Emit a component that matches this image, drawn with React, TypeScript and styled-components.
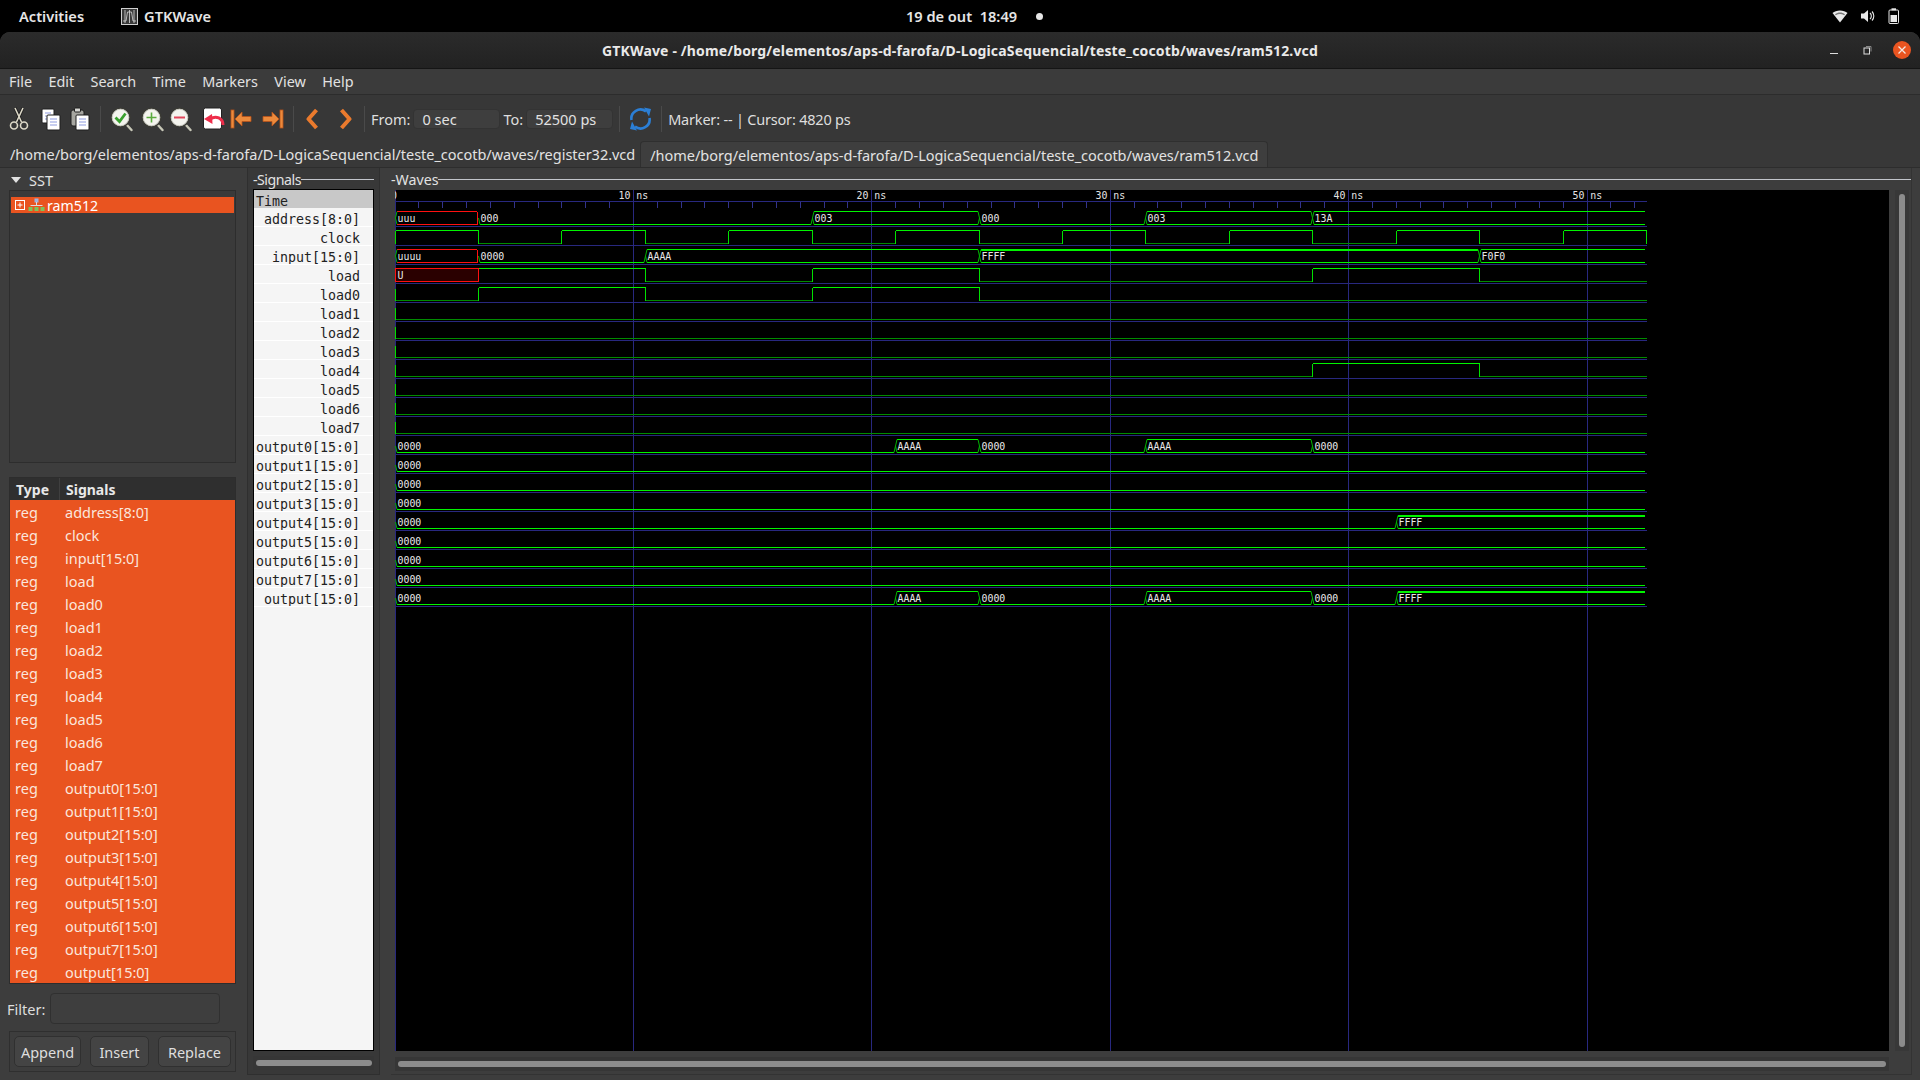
import React from "react";
import styled, { createGlobalStyle } from "styled-components";

const UI = `"Noto Sans", "Open Sans", sans-serif`;
const MONO = `"DejaVu Sans Mono", "Liberation Mono", monospace`;

const Global = createGlobalStyle`
  html, body { margin: 0; padding: 0; background: #000; overflow: hidden; }
  * { box-sizing: border-box; }
`;

const Page = styled.div`
  width: 1920px; height: 1080px; display: flex; flex-direction: column;
  background: #000; font-family: ${UI}; color: #e8e8e8; overflow: hidden;
`;
const TopBar = styled.div`
  height: 32px; flex: none; display: grid; grid-template-columns: 1fr auto 1fr; align-items: center;
  background: #000; padding: 0 18px 0 19px; font-size: 14.6px; font-weight: 600; color: #e6e6e6;
`;
const TopLeft = styled.div`display: flex; align-items: center;`;
const TopItem = styled.span`display: flex; align-items: center; gap: 6px; margin-left: ${p => p.$ml || 0}px;`;
const TopCenter = styled.div`display: flex; align-items: center; gap: 19px; transform: translateX(14px);`;
const Dot = styled.span`width: 7px; height: 7px; border-radius: 50%; background: #e6e6e6;`;
const TopRight = styled.div`display: flex; align-items: center; justify-content: flex-end; gap: 12px; padding-right: 2px;`;

const Win = styled.div`
  flex: 1; display: flex; flex-direction: column; border-radius: 10px 10px 0 0; overflow: hidden; background: #3c3c3c;
`;
const TitleBar = styled.div`
  height: 37px; flex: none; position: relative; display: flex; align-items: center; justify-content: center;
  background: linear-gradient(#2b2b2b, #222222); border-bottom: 1px solid #151515;
  font-size: 14px; font-weight: 700; color: #e9e9e9; letter-spacing: 0.15px;
`;
const WinButtons = styled.div`
  position: absolute; right: 8px; top: 7px; display: flex; align-items: center;
`;
const WinIcon = styled.svg`flex: none; margin-left: ${p => p.$ml}px;`;
const MenuBar = styled.div`
  height: 26px; flex: none; display: flex; align-items: center; padding-left: 9px; gap: 16.4px;
  background: #3b3b3b; border-bottom: 1px solid #2c2c2c; font-size: 14.4px; color: #e2e2e2;
`;
const Toolbar = styled.div`
  height: 45px; flex: none; display: flex; align-items: center; padding: 3px 0 0 9px; background: #373737;
  font-size: 14.5px; color: #dedede;
`;
const ToolIcon = styled.svg`flex: none; margin-right: ${p => p.$mr ?? 8}px;`;
const Sep = styled.span`width: 1px; height: 26px; background: #4a4a4a; flex: none; margin: 0 ${p => p.$r ?? 9}px 0 ${p => p.$l ?? 0}px;`;
const Label = styled.span`flex: none; letter-spacing: ${p => p.$ls || 0}px;`;
const Entry = styled.span`
  flex: none; width: 87px; height: 20px; margin: 0 3px; padding-left: 8px; background: #3e3e3e; border: 1px solid #333; border-radius: 4px;
  display: flex; align-items: center; color: #e2e2e2;
`;
const TabStrip = styled.div`
  height: 28px; flex: none; display: flex; align-items: stretch; background: #383838; padding: 1px 0 0 10px; font-size: 14.5px;
  border-bottom: 1px solid #2d2d2d; color: #e2e2e2;
`;
const Tab = styled.div`
  display: flex; align-items: center; white-space: nowrap; letter-spacing: -0.025px;
  ${p => p.$active ? `margin-left: 5px; padding: 0 9px; background: #3e3e3e; border: 1px solid #2f2f2f; border-bottom: none; border-radius: 4px 4px 0 0;` : ``}
`;
const Main = styled.div`
  flex: 1; display: grid; grid-template-columns: 247px 133px 1fr; background: #3d3d3d; min-height: 0;
`;
const LeftCol = styled.div`display: flex; flex-direction: column; padding: 3px 11px 0 9px;`;
const SstHead = styled.div`
  height: 19px; display: flex; align-items: center; gap: 8px; padding: 0 0 1px 2px; font-size: 14.5px; color: #e2e2e2;
`;
const Tri = styled.span`
  width: 0; height: 0; border-left: 5px solid transparent; border-right: 5px solid transparent; border-top: 6px solid #e2e2e2;
`;
const SstFrame = styled.div`
  height: 273px; border: 1px solid #2d2d2d; background: #3a3a3a; padding: 6px 1px;
`;
const SstRow = styled.div`
  height: 16px; background: #e95420; display: flex; align-items: center; padding-left: 3px; color: #fff; font-size: 14.2px; gap: 2px;
`;
const ListFrame = styled.div`
  margin-top: 14px; height: 507px; border: 1px solid #2d2d2d; display: flex; flex-direction: column;
`;
const ListHead = styled.div`
  height: 22px; flex: none; display: grid; grid-template-columns: 50px 1fr; background: #2f2f2f; font-weight: 700; font-size: 14px; color: #e8e8e8;
`;
const HeadCell = styled.div`
  display: flex; align-items: center; padding-left: ${p => p.$pl}px; border-right: ${p => p.$sep ? "1px solid #3f3f3f" : "none"};
`;
const SigRows = styled.div`flex: 1; background: #e95420;`;
const SigRow = styled.div`
  height: 23px; display: grid; grid-template-columns: 50px 1fr; align-items: center; padding-left: 5px; color: #fbe6dc; font-size: 14.5px;
`;
const FilterRow = styled.div`
  margin: 9px 0 0 -2px; display: flex; align-items: center; gap: 5px; font-size: 14.5px; color: #dedede;
`;
const FilterInput = styled.div`
  width: 170px; height: 31px; background: #3e3e3e; border: 1px solid #303030; border-radius: 4px;
`;
const BtnFrame = styled.div`
  margin-top: 7px; height: 41px; border: 1px solid #2f2f2f; display: flex; align-items: center; padding-left: 4px;
`;
const Btn = styled.div`
  width: ${p => p.$w}px; height: 31px; margin-right: ${p => p.$mr}px; display: flex; align-items: center; justify-content: center;
  background: #444; border: 1px solid #303030; border-radius: 5px; font-size: 14.5px; color: #dedede;
`;
const SignalsCol = styled.div`
  display: flex; flex-direction: column; background: #383838; border: 1px solid #2f2f2f; border-top: none; margin-bottom: 5px; padding: 0 5px 0 5px;
`;
const Legend = styled.div`
  height: ${p => p.$h}px; flex: none; display: flex; align-items: center; font-size: 14.2px; color: #e2e2e2; padding-top: 1px;
  letter-spacing: ${p => p.$ls || 0}px;
`;
const LegendLine = styled.span`flex: 1; height: 1px; background: #c2c5cb;`;
const SigBox = styled.div`
  height: 862px; flex: none; border: 1px solid #000; background: #f5f5f5; font-family: ${MONO}; font-size: 13.3px; color: #222; overflow: hidden;
`;
const TimeRow = styled.div`height: 18px; background: #c8c8c8; padding-left: 2px; line-height: 23px; overflow: hidden;`;
const NameRow = styled.div`
  height: 19px; line-height: 23px; text-align: right; padding-right: 13px; border-bottom: 1px solid #fff; white-space: nowrap; overflow: hidden;
`;
const HTrough = styled.div`
  margin-top: ${p => p.$mt}px; height: 14px; background: #363636; display: flex; align-items: center; padding: 0 ${p => p.$pr}px 0 ${p => p.$pl}px;
`;
const Thumb = styled.div`flex: 1; height: 6px; border-radius: 3px; background: #8c8c8c;`;
const WaveCol = styled.div`
  display: flex; flex-direction: column; margin: 0 8px 5px 11px; border-right: 1px solid #333; border-bottom: 1px solid #333; padding-left: 4px;
`;
const WaveLegend = styled(Legend)`margin-left: -4px;`;
const WaveBody = styled.div`display: flex; flex: none; height: 861px;`;
const WaveSvg = styled.svg`display: block; flex: none; background: #000;`;
const VTrough = styled.div`
  width: 14px; margin-left: 6px; flex: none; background: #383838; display: flex; justify-content: center; padding: 4px 0;
`;
const VThumb = styled.div`width: 6px; border-radius: 3px; background: #8c8c8c;`;
const WaveHBar = styled(HTrough)`width: 1494px;`;

const X = (t: number) => Math.floor(395 + 23.84 * t) + 0.5;
const HI = (i: number) => 211.5 + 19 * i;
const LO = (i: number) => 224.5 + 19 * i;
const END = 52.5;
const G1 = "#00f400";
const G0 = "#008c00";
const GV = "#00e000";
const GS = "#00b400";
const RED = "#ff1010";
const BLUE = "#28287f";

type Bit = { name: string; init: 0 | 1 | "U"; edges: [number, 0 | 1][] };
type Vec = { name: string; segs: [number, string][] };
type Sig = Bit | Vec;
const b = (name: string, init: 0 | 1 | "U", edges: [number, 0 | 1][] = []): Sig => ({ name, init, edges });
const v = (name: string, segs: [number, string][]): Sig => ({ name, segs });

const clockEdges: [number, 0 | 1][] = [];
for (let k = 1; k * 3.5 < END; k++) clockEdges.push([k * 3.5, (k % 2 === 0 ? 1 : 0) as 0 | 1]);

const SIGNALS: Sig[] = [
  v("address[8:0]", [[0, "uuu"], [3.5, "000"], [17.5, "003"], [24.5, "000"], [31.5, "003"], [38.5, "13A"]]),
  b("clock", 1, clockEdges),
  v("input[15:0]", [[0, "uuuu"], [3.5, "0000"], [10.5, "AAAA"], [24.5, "FFFF"], [45.5, "F0F0"]]),
  b("load", "U", [[3.5, 1], [10.5, 0], [17.5, 1], [24.5, 0], [38.5, 1], [45.5, 0]]),
  b("load0", 0, [[3.5, 1], [10.5, 0], [17.5, 1], [24.5, 0]]),
  b("load1", 0), b("load2", 0), b("load3", 0),
  b("load4", 0, [[38.5, 1], [45.5, 0]]),
  b("load5", 0), b("load6", 0), b("load7", 0),
  v("output0[15:0]", [[0, "0000"], [21, "AAAA"], [24.5, "0000"], [31.5, "AAAA"], [38.5, "0000"]]),
  v("output1[15:0]", [[0, "0000"]]),
  v("output2[15:0]", [[0, "0000"]]),
  v("output3[15:0]", [[0, "0000"]]),
  v("output4[15:0]", [[0, "0000"], [42, "FFFF"]]),
  v("output5[15:0]", [[0, "0000"]]),
  v("output6[15:0]", [[0, "0000"]]),
  v("output7[15:0]", [[0, "0000"]]),
  v("output[15:0]", [[0, "0000"], [21, "AAAA"], [24.5, "0000"], [31.5, "AAAA"], [38.5, "0000"], [42, "FFFF"]]),
];

const TYPES = SIGNALS.map(s => s.name);

function BitTrace({ s, i }: { s: Bit; i: number }) {
  const pts: [number, 0 | 1 | "U"][] = [[0, s.init], ...s.edges];
  const hi = HI(i), lo = LO(i);
  return (
    <g shapeRendering="crispEdges" fill="none">
      {s.init !== "U" && <line x1={X(0)} x2={X(0)} y1={s.init === 1 ? hi : hi + 1} y2={lo} stroke={GV} />}
      {pts.map(([t, val], k) => {
        const x1 = X(t);
        const x2 = X(k + 1 < pts.length ? pts[k + 1][0] : END);
        if (val === "U") {
          return (
            <g key={k}>
              <rect x={x1} y={hi} width={x2 - x1} height={lo - hi} fill="#2a0000" stroke={RED} />
              <text x={x1 + 2} y={222 + 19 * i} fill="#e8e8e8" stroke="none" fontFamily={MONO} fontSize="9.9" shapeRendering="auto">U</text>
            </g>
          );
        }
        const nextExists = k + 1 < pts.length;
        return (
          <g key={k}>
            <line x1={x1} x2={x2} y1={val === 1 ? hi : lo} y2={val === 1 ? hi : lo} stroke={val === 1 ? G1 : G0} />
            {(nextExists || s.name === "clock") && <line x1={x2} x2={x2} y1={hi} y2={lo} stroke={GV} />}
          </g>
        );
      })}
    </g>
  );
}

function VecTrace({ s, i }: { s: Vec; i: number }) {
  const hi = HI(i), lo = LO(i), mid = (hi + lo) / 2;
  return (
    <g fill="none">
      {s.segs.map(([t, val], k) => {
        const last = k + 1 === s.segs.length;
        const xa = X(t);
        const xb = last ? X(END) - 2 : X(s.segs[k + 1][0]);
        const isU = val[0] === "u";
        const isZero = /^0+$/.test(val);
        const isF = /^F+$/.test(val);
        const col = isU ? RED : G1;
        const lead = xa + 1.5;
        const trail = last ? xb : xb - 1.5;
        return (
          <g key={k}>
            <line x1={lead} x2={trail} y1={lo} y2={lo} stroke={col} shapeRendering="crispEdges" />
            {!isZero && (
              <line x1={lead} x2={trail} y1={hi + (isF ? 0.5 : 0)} y2={hi + (isF ? 0.5 : 0)} stroke={col} strokeWidth={isF ? 2 : 1} shapeRendering="crispEdges" />
            )}
            {isU && <line x1={xb - 1} x2={xb - 1} y1={hi} y2={lo} stroke={col} shapeRendering="crispEdges" />}
            <path d={`M${xa} ${mid}L${lead} ${lo}`} stroke={GS} />
            {!isZero && <path d={`M${xa} ${mid}L${lead} ${hi}`} stroke={GS} />}
            {!isZero && !last && !isU && <path d={`M${trail} ${hi}L${xb} ${mid}L${trail} ${lo}`} stroke={GS} />}
            {isZero && !last && <path d={`M${trail} ${lo}L${xb} ${mid}`} stroke={GS} />}
            <text x={xa + 2} y={222 + 19 * i} fill="#e8e8e8" fontFamily={MONO} fontSize="9.9">{val}</text>
          </g>
        );
      })}
    </g>
  );
}

function Waves() {
  const ticks: number[] = [];
  for (let t = 1; t <= 52; t++) if (t % 10) ticks.push(t);
  return (
    <WaveSvg width={1494} height={861} viewBox="395 190 1494 861">
      <defs>
        <clipPath id="panel"><rect x="395" y="190" width="1494" height="861" /></clipPath>
      </defs>
      <g clipPath="url(#panel)">
        <g stroke={BLUE} shapeRendering="crispEdges">
          {[0, 10, 20, 30, 40, 50].map(t => <line key={t} x1={X(t)} x2={X(t)} y1={190} y2={1051} />)}
          {ticks.map(t => <line key={t} x1={X(t)} x2={X(t)} y1={202} y2={208} stroke="#33338c" />)}
          <line x1={395} x2={1647} y1={201.5} y2={201.5} />
          {SIGNALS.map((_, i) => <line key={i} x1={395} x2={1647} y1={226.5 + 19 * i} y2={226.5 + 19 * i} />)}
        </g>
        <g fontFamily={MONO} fontSize="9.9" fill="#e4e4e4">
          <text x={391} y={199}>0</text>
          {[10, 20, 30, 40, 50].map(t => <text key={t} x={X(t) - 15} y={199} xmlSpace="preserve">{`${t} ns`}</text>)}
        </g>
        {SIGNALS.map((s, i) =>
          "edges" in s ? <BitTrace key={s.name} s={s} i={i} /> : <VecTrace key={s.name} s={s} i={i} />
        )}
      </g>
    </WaveSvg>
  );
}

const IconScissors = () => (
  <ToolIcon width="20" height="24" viewBox="0 0 20 24" $mr={12}>
    <g fill="none" stroke="#1d1d1d" strokeWidth="3">
      <path d="M6 1 L12.5 15 M14 1 L7.5 15" />
    </g>
    <g fill="none" stroke="#ddd9c8" strokeWidth="1.6">
      <path d="M6 1 L12.5 15 M14 1 L7.5 15" />
      <circle cx="5" cy="18.5" r="3.5" />
      <circle cx="15" cy="18.5" r="3.5" />
    </g>
  </ToolIcon>
);
const Page2 = ({ x, y, w = 13, h = 15 }: { x: number; y: number; w?: number; h?: number }) => (
  <g>
    <rect x={x} y={y} width={w} height={h} rx="1" fill="#fff" stroke="#1f1f1f" />
    <path d={`M${x + 3} ${y + 4}h${w - 6}M${x + 3} ${y + 7}h${w - 6}M${x + 3} ${y + 10}h${w - 6}`} stroke="#8e9be0" strokeWidth="1" />
  </g>
);
const IconCopy = () => (
  <ToolIcon width="20" height="24" viewBox="0 0 20 24" $mr={9}>
    <Page2 x={1} y={2} w={12} h={14} />
    <Page2 x={6} y={8} />
  </ToolIcon>
);
const IconPaste = () => (
  <ToolIcon width="20" height="24" viewBox="0 0 20 24" $mr={10}>
    <rect x="1" y="3" width="13" height="16" rx="2" fill="#a6a6a0" stroke="#1f1f1f" />
    <rect x="4.5" y="1" width="6" height="4" rx="1" fill="#d8d8d4" stroke="#1f1f1f" />
    <Page2 x={6} y={8} />
  </ToolIcon>
);
const Glass = ({ children, mr = 8 }: { children: React.ReactNode; mr?: number }) => (
  <ToolIcon width="23" height="25" viewBox="0 0 23 25" $mr={mr}>
    <path d="M16 17 L21.5 23" stroke="#c8c8b8" strokeWidth="2.4" strokeLinecap="round" />
    <circle cx="10.5" cy="10.5" r="9.3" fill="#f4f4ee" stroke="#3a3a34" strokeWidth="1.6" />
    <circle cx="10.5" cy="10.5" r="8.3" fill="none" stroke="#c8c8c0" strokeWidth="1" />
    {children}
  </ToolIcon>
);
const IconUndo = () => (
  <ToolIcon width="22" height="24" viewBox="0 0 22 24" $mr={5}>
    <rect x="0.5" y="1" width="18" height="21" rx="2" fill="#fff" stroke="#202020" />
    <path d="M20 18 C20 11 13 8 7 12" fill="none" stroke="#ee2d4a" strokeWidth="3" />
    <path d="M1 12 L9 7 L9.5 17 Z" fill="#ee2d4a" />
  </ToolIcon>
);
const ArrowBar = ({ flip, mr }: { flip?: boolean; mr: number }) => (
  <ToolIcon width="22" height="24" viewBox="0 0 22 24" $mr={mr}>
    <g transform={flip ? "translate(22 0) scale(-1 1)" : undefined} fill="#ec8a3c" stroke="#b9531a" strokeWidth="0.8">
      <rect x="1" y="3" width="3" height="18" />
      <path d="M5 12 L12 5 L12 9.5 L21 9.5 L21 14.5 L12 14.5 L12 19 Z" />
    </g>
  </ToolIcon>
);
const Chevron = ({ right, mr }: { right?: boolean; mr: number }) => (
  <ToolIcon width="13" height="24" viewBox="0 0 13 24" $mr={mr}>
    <path d={right ? "M2.5 3 L10.5 12 L2.5 21" : "M10.5 3 L2.5 12 L10.5 21"} fill="none" stroke="#ea7a2d" strokeWidth="4" strokeLinejoin="round" />
  </ToolIcon>
);
const IconRefresh = () => (
  <ToolIcon width="23" height="24" viewBox="0 0 23 24" $mr={9}>
    <g fill="none" stroke="#2b7fd6" strokeWidth="2.6">
      <path d="M2.5 13 A9 9 0 0 1 17 4.5" />
      <path d="M20.5 11 A9 9 0 0 1 6 19.5" />
    </g>
    <path d="M15 0.5 L22 2 L20 9.5 Z M8 23.5 L1 22 L3 14.5 Z" fill="#2b7fd6" />
  </ToolIcon>
);

export default function App() {
  return (
    <Page>
      <Global />
      <TopBar>
        <TopLeft>
          <TopItem>Activities</TopItem>
          <TopItem $ml={37}>
            <svg width="17" height="17" viewBox="0 0 17 17">
              <rect x="0.5" y="0.5" width="16" height="16" fill="#3a3a3a" stroke="#cfcfcf" />
              <path d="M2 13 H5 L6.5 4 H10.5 L12 13 H15 M4 2v13M8.5 2v13M13 2v13" fill="none" stroke="#d8d8d8" strokeWidth="0.8" />
            </svg>
            GTKWave
          </TopItem>
        </TopLeft>
        <TopCenter>
          <span>19 de out&nbsp;&nbsp;18:49</span>
          <Dot />
        </TopCenter>
        <TopRight>
          <svg width="16" height="16" viewBox="0 0 16 16"><path d="M0.5 5 C4 1.5 12 1.5 15.5 5 L8 14.5 Z" fill="#e8e8e8" /><path d="M3 6.2 C6 4 10 4 13 6.2 L12.2 7.2 C9.5 5.6 6.5 5.6 3.8 7.2 Z" fill="#777" /></svg>
          <svg width="16" height="16" viewBox="0 0 16 16"><path d="M1 5.5 H4 L8 2 V14 L4 10.5 H1 Z" fill="#e8e8e8" /><path d="M10 5 A4 4 0 0 1 10 11 M12 3.5 A6.5 6.5 0 0 1 12 12.5" fill="none" stroke="#e8e8e8" strokeWidth="1.1" /></svg>
          <svg width="12" height="16" viewBox="0 0 12 16"><rect x="1" y="2" width="9.5" height="13.5" rx="1" fill="none" stroke="#e8e8e8" /><rect x="3.5" y="0.3" width="4.5" height="2" fill="#e8e8e8" /><rect x="2.5" y="7" width="6.5" height="7" fill="#e8e8e8" /></svg>
        </TopRight>
      </TopBar>
      <Win>
        <TitleBar>
          GTKWave - /home/borg/elementos/aps-d-farofa/D-LogicaSequencial/teste_cocotb/waves/ram512.vcd
          <WinButtons>
            <WinIcon $ml={0} width="12" height="12" viewBox="0 0 12 12"><path d="M2 9.5h8" stroke="#ddd" strokeWidth="1.2" /></WinIcon>
            <WinIcon $ml={21} width="12" height="12" viewBox="0 0 12 12"><rect x="3" y="4" width="5.5" height="6" fill="none" stroke="#ddd" /><path d="M5 2.5h5v5" fill="none" stroke="#888" /></WinIcon>
            <WinIcon $ml={19} width="20" height="22" viewBox="0 0 20 22"><circle cx="10" cy="11" r="9" fill="#e95420" /><path d="M6.5 7.5l7 7M13.5 7.5l-7 7" stroke="#f4e8e2" strokeWidth="1.3" /></WinIcon>
          </WinButtons>
        </TitleBar>
        <MenuBar>
          {["File", "Edit", "Search", "Time", "Markers", "View", "Help"].map(m => <span key={m}>{m}</span>)}
        </MenuBar>
        <Toolbar>
          <IconScissors />
          <IconCopy />
          <IconPaste />
          <Sep />
          <Glass><path d="M5.5 10.5 L9.5 14.5 L15.5 6.5" fill="none" stroke="#3aa02e" strokeWidth="2.8" /></Glass>
          <Glass mr={5}><path d="M10.5 5.5v10M5.5 10.5h10" stroke="#5cab3f" strokeWidth="1.6" fill="none" /></Glass>
          <Glass mr={11}><path d="M5 10.5h11" stroke="#e2475a" strokeWidth="2" fill="none" /></Glass>
          <IconUndo />
          <ArrowBar mr={10} />
          <ArrowBar flip mr={9} />
          <Sep $r={12} />
          <Chevron mr={20} />
          <Chevron right mr={12} />
          <Sep $r={6} />
          <Label>From:</Label>
          <Entry>0 sec</Entry>
          <Label>To:</Label>
          <Entry>52500 ps</Entry>
          <Sep $l={3} $r={9} />
          <IconRefresh />
          <Sep $r={6} />
          <Label $ls={-0.2}>Marker: -- | Cursor: 4820 ps</Label>
        </Toolbar>
        <TabStrip>
          <Tab>/home/borg/elementos/aps-d-farofa/D-LogicaSequencial/teste_cocotb/waves/register32.vcd</Tab>
          <Tab $active>/home/borg/elementos/aps-d-farofa/D-LogicaSequencial/teste_cocotb/waves/ram512.vcd</Tab>
        </TabStrip>
        <Main>
          <LeftCol>
            <SstHead><Tri />SST</SstHead>
            <SstFrame>
              <SstRow>
                <svg width="12" height="12" viewBox="0 0 12 12"><rect x="1.5" y="1.5" width="9" height="9" fill="none" stroke="#fff" /><path d="M3.5 6h5M6 3.5v5" stroke="#fff" /></svg>
                <svg width="17" height="15" viewBox="0 0 17 15"><rect x="6.5" y="0.5" width="4" height="4" fill="#9fb4e0" /><path d="M8.5 4v3M2.5 7.5h12" stroke="#ddd" /><rect x="0.5" y="9" width="4" height="4" fill="#7cc45c" /><rect x="6.5" y="9" width="4" height="4" fill="#7cc45c" /><rect x="12.5" y="9" width="4" height="4" fill="#7cc45c" /></svg>
                ram512
              </SstRow>
            </SstFrame>
            <ListFrame>
              <ListHead>
                <HeadCell $pl={6} $sep>Type</HeadCell>
                <HeadCell $pl={6}>Signals</HeadCell>
              </ListHead>
              <SigRows>
                {TYPES.map(n => <SigRow key={n}><span>reg</span><span>{n}</span></SigRow>)}
              </SigRows>
            </ListFrame>
            <FilterRow>
              <span>Filter:</span>
              <FilterInput />
            </FilterRow>
            <BtnFrame>
              <Btn $w={67} $mr={9}>Append</Btn>
              <Btn $w={59} $mr={9}>Insert</Btn>
              <Btn $w={73} $mr={0}>Replace</Btn>
            </BtnFrame>
          </LeftCol>
          <SignalsCol>
            <Legend $h={21} $ls={-0.5}>-Signals<LegendLine /></Legend>
            <SigBox>
              <TimeRow>Time</TimeRow>
              {SIGNALS.map(s => <NameRow key={s.name}>{s.name}</NameRow>)}
            </SigBox>
            <HTrough $mt={5} $pl={3} $pr={2}><Thumb /></HTrough>
          </SignalsCol>
          <WaveCol>
            <WaveLegend $h={22}>-Waves<LegendLine /></WaveLegend>
            <WaveBody>
              <Waves />
              <VTrough><VThumb /></VTrough>
            </WaveBody>
            <WaveHBar $mt={6} $pl={3} $pr={3}><Thumb /></WaveHBar>
          </WaveCol>
        </Main>
      </Win>
    </Page>
  );
}
